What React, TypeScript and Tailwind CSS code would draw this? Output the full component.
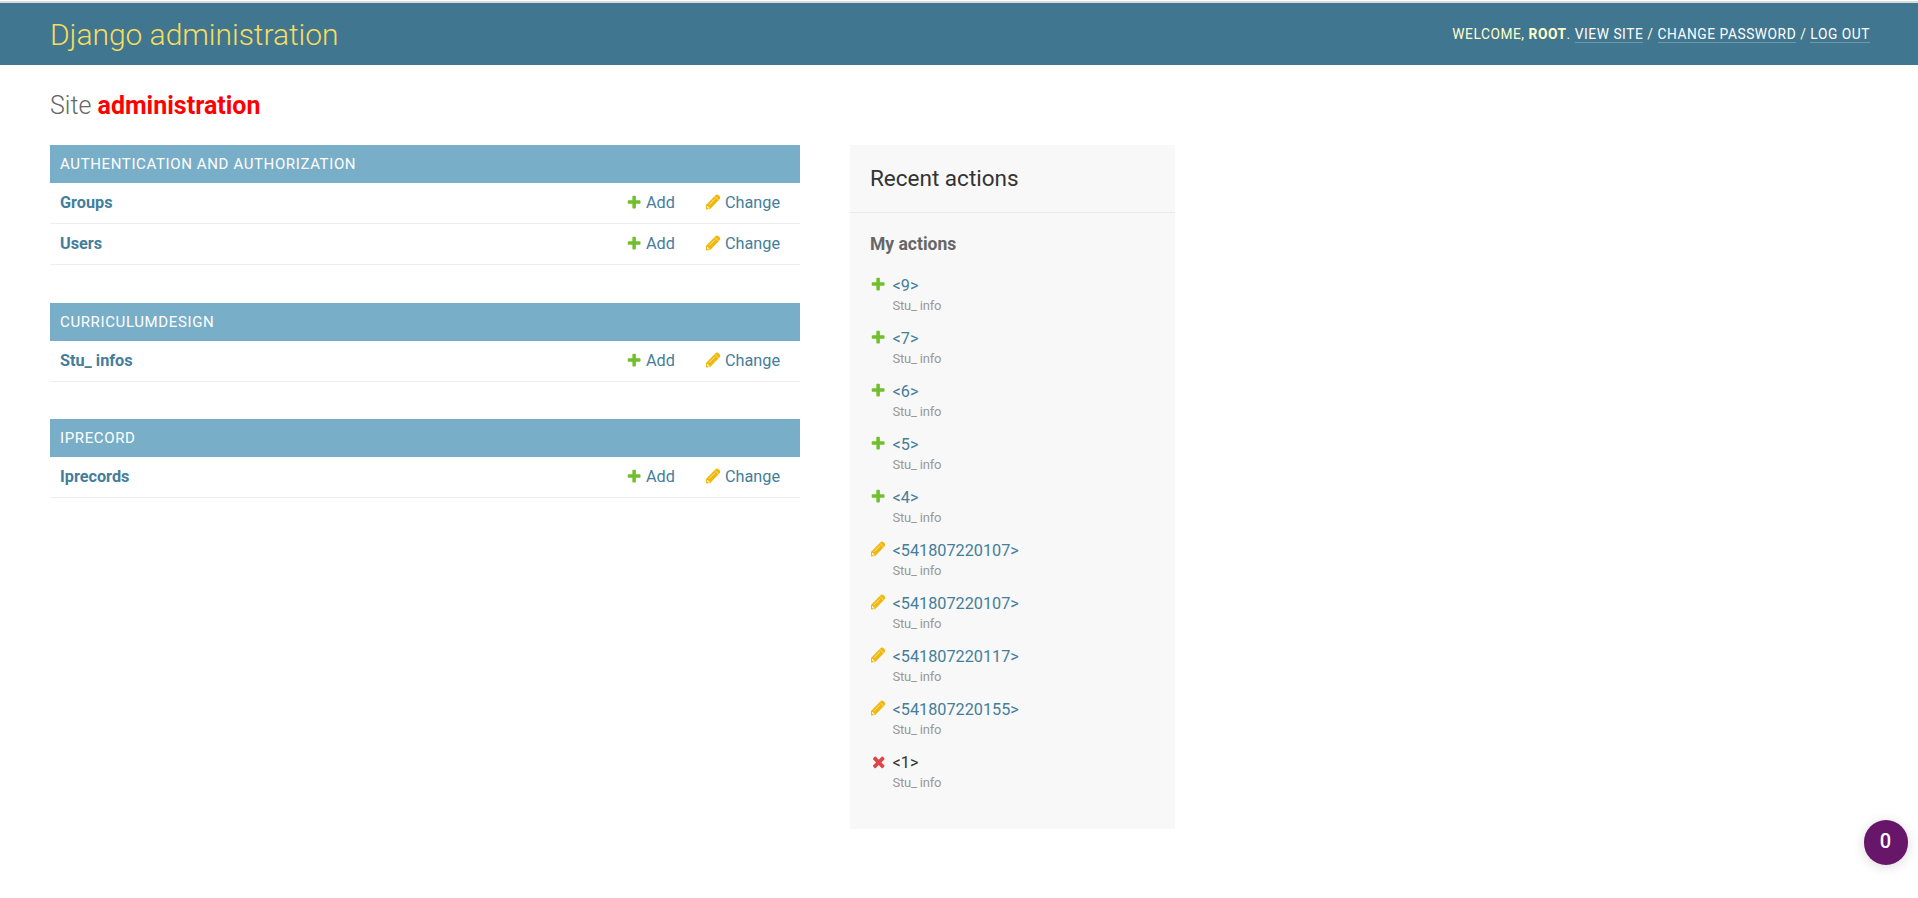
import React from 'react';
import { clsx } from 'clsx';

type ActionType = 'add' | 'change' | 'delete';

const ActionIcon = ({ type, className }: { type: ActionType; className?: string }) => {
  if (type === 'change') {
    return (
      <svg viewBox="0 0 16.25 16.25" className={clsx('shrink-0', className)}>
        <path
          fill="#efb80b"
          d="M1 10.9 10.2 1.4Q12-.2 13.5 1.2L14.8 2.5Q15.8 4 14.4 5.6L5.2 15.1 1 15.5Z"
        />
        <path fill="none" stroke="#fff" strokeOpacity=".8" strokeWidth=".8" d="M4.2 10.7 10 4.8" />
        <path fill="none" stroke="#fff" strokeOpacity=".65" strokeWidth=".8" d="M10 2.4 13.6 6.1" />
        <path fill="#fff" fillOpacity=".95" d="M2.1 12.1h1.1v1.4h1.3v.9l-1.2.2-1.4-1.4z" />
      </svg>
    );
  }

  return (
    <svg viewBox="0 0 1792 1792" className={clsx('shrink-0', className)}>
      {type === 'add' ? (
        <path
          fill="#70bf2b"
          d="M1600 796v192q0 40-28 68t-68 28h-416v416q0 40-28 68t-68 28h-192q-40 0-68-28t-28-68v-416h-416q-40 0-68-28t-28-68v-192q0-40 28-68t68-28h416v-416q0-40 28-68t68-28h192q40 0 68 28t28 68v416h416q40 0 68 28t28 68z"
        />
      ) : (
        <path
          fill="#dd4646"
          d="M1490 1322q0 40-28 68l-136 136q-28 28-68 28t-68-28l-294-294-294 294q-28 28-68 28t-68-28l-136-136q-28-28-28-68t28-68l294-294-294-294q-28-28-28-68t28-68l136-136q28-28 68-28t68 28l294 294 294-294q28-28 68-28t68 28l136 136q28 28 28 68t-28 68l-294 294 294 294q28 28 28 68z"
        />
      )}
    </svg>
  );
};

const apps = [
  { name: 'Authentication and Authorization', models: ['Groups', 'Users'], spacing: 'mb-[38px]' },
  { name: 'Curriculumdesign', models: ['Stu_ infos'], spacing: 'mb-[37px]' },
  { name: 'Iprecord', models: ['Iprecords'], spacing: '' },
];

const recentActions: { type: ActionType; label: string }[] = [
  { type: 'add', label: '<9>' },
  { type: 'add', label: '<7>' },
  { type: 'add', label: '<6>' },
  { type: 'add', label: '<5>' },
  { type: 'add', label: '<4>' },
  { type: 'change', label: '<541807220107>' },
  { type: 'change', label: '<541807220107>' },
  { type: 'change', label: '<541807220117>' },
  { type: 'change', label: '<541807220155>' },
  { type: 'delete', label: '<1>' },
];

const HeaderLink = ({ children }: { children: React.ReactNode }) => (
  <a href="#" className="border-b border-white/25 text-white">
    {children}
  </a>
);

const Header = () => (
  <header className="flex h-[62px] items-center justify-between bg-[#417690] px-[50px] text-[#ffc]">
    <h1 className="text-[30px] leading-[37px] font-light tracking-[-0.04px] text-[#f5dd5d]">
      Django administration
    </h1>
    <div className="mr-[-2px] text-[13.75px] leading-4 font-normal tracking-[0.55px] uppercase">
      Welcome, <strong className="font-bold">root</strong>. <HeaderLink>View site</HeaderLink> /{' '}
      <HeaderLink>Change password</HeaderLink> / <HeaderLink>Log out</HeaderLink>
    </div>
  </header>
);

const AppModule = ({ name, models, spacing }: { name: string; models: string[]; spacing: string }) => (
  <section className={spacing}>
    <h2 className="flex h-[38px] items-center bg-[#79aec8] px-2.5 text-[15px] font-normal tracking-[0.625px] text-white uppercase">
      {name}
    </h2>
    {models.map((model) => (
      <div
        key={model}
        className="flex h-[41px] items-center border-b border-[#eee] pl-2.5 text-[16.25px] text-[#447e9b]"
      >
        <a href="#" className="flex-1 font-bold">
          {model}
        </a>
        <a href="#" className="flex w-[79px] items-center">
          <ActionIcon type="add" className="mr-[3.75px] mb-px size-[16.25px]" />
          Add
        </a>
        <a href="#" className="flex w-[95px] items-center">
          <ActionIcon type="change" className="mr-[3.75px] mb-px size-[16.25px]" />
          Change
        </a>
      </div>
    ))}
  </section>
);

const RecentActions = () => (
  <aside className="h-[684px] w-[325px] bg-[#f8f8f8]">
    <h2 className="flex h-[68px] items-center border-b border-[#eaeaea] px-5 text-[22.5px] text-[#333]">
      Recent actions
    </h2>
    <h3 className="px-5 pt-5 text-[17.5px] leading-[22px] font-bold text-[#666]">My actions</h3>
    <ul className="px-5 pt-[18px]">
      {recentActions.map(({ type, label }, index) => (
        <li key={index} className="flex h-[53px]">
          <div className="w-[22.5px]">
            <ActionIcon
              type={type}
              className={type === 'delete' ? 'mt-[3px] size-[17.5px]' : 'mt-[3px] size-[16.25px]'}
            />
          </div>
          <div className="pt-px">
            <a
              href="#"
              className={clsx(
                'block text-[16.25px] leading-6',
                type === 'delete' ? 'text-[#333]' : 'text-[#447e9b]'
              )}
            >
              {label}
            </a>
            <span className="block text-[13px] leading-4 tracking-[-0.2px] text-[#999]">Stu_ info</span>
          </div>
        </li>
      ))}
    </ul>
  </aside>
);

const App = () => (
  <div className="relative h-[898px] overflow-hidden bg-white font-['Roboto',sans-serif]">
    <div className="h-[3px] border-b-2 border-[#dcdcdc]" />
    <Header />
    <main className="px-[50px] pt-[26px]">
      <h1 className="mb-6 text-[25px] leading-[30px] font-light text-[#666]">
        Site <b className="font-bold text-[#f00]">administration</b>
      </h1>
      <div className="flex gap-[50px]">
        <div className="w-[750px]">
          {apps.map((app) => (
            <AppModule key={app.name} {...app} />
          ))}
        </div>
        <RecentActions />
      </div>
    </main>

    {/* Floating counter */}
    <div className="absolute top-[820px] right-2.5 flex h-[45px] w-11 items-center justify-center rounded-full bg-[#681669] pr-px pb-[3px] text-xl font-medium text-white shadow-[0_2px_12px_rgba(0,0,0,0.15)]">
      0
    </div>
  </div>
);

export default App;
